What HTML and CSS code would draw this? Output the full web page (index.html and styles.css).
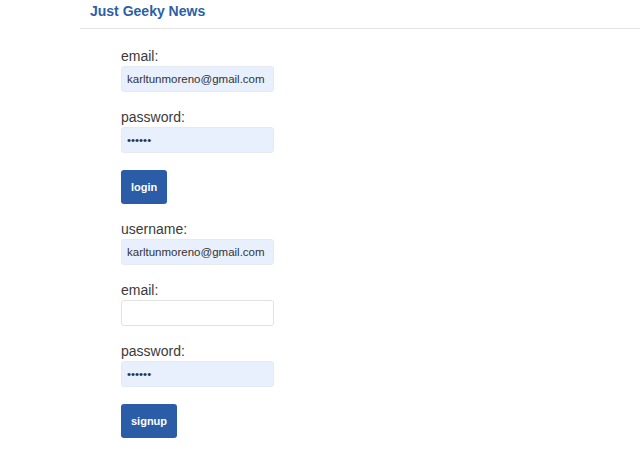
FILE: index.html
```html
<!DOCTYPE html>
<html>
<head>
<meta charset="utf-8">
<link rel="stylesheet" href="styles.css">
</head>
<body>
<header class="topbar">
  <div class="title">Just Geeky News</div>
</header>
<main class="forms">
  <form class="form">
    <label class="field">
      <span class="label">email:</span>
      <input class="input filled" type="text" value="karltunmoreno@gmail.com">
    </label>
    <label class="field">
      <span class="label">password:</span>
      <input class="input filled" type="password" value="abcdef">
    </label>
    <button class="btn" type="button">login</button>
  </form>
  <form class="form">
    <label class="field">
      <span class="label">username:</span>
      <input class="input filled" type="text" value="karltunmoreno@gmail.com">
    </label>
    <label class="field">
      <span class="label">email:</span>
      <input class="input" type="text" value="">
    </label>
    <label class="field">
      <span class="label">password:</span>
      <input class="input filled" type="password" value="abcdef">
    </label>
    <button class="btn" type="button">signup</button>
  </form>
</main>
</body>
</html>
```
FILE: styles.css
```css
html, body {
  margin: 0;
  padding: 0;
  background: #fff;
  font-family: "Liberation Sans", Arial, sans-serif;
}
.topbar {
  margin-left: 80px;
  height: 29px;
  border-bottom: 1px solid #e4e4e4;
  padding-left: 10px;
  box-sizing: border-box;
}
.title {
  font-size: 14px;
  font-weight: bold;
  color: #2c5fa6;
  line-height: 22px;
}
.forms {
  padding: 19px 0 0 121px;
}
.form {
  display: flex;
  flex-direction: column;
  align-items: flex-start;
}
.field {
  display: flex;
  flex-direction: column;
  margin-bottom: 17px;
}
.label {
  font-size: 14px;
  line-height: 16px;
  color: #3a3a3a;
}
.input {
  margin-top: 2px;
  width: 153px;
  height: 26px;
  box-sizing: border-box;
  border: 1px solid #e2e2e2;
  border-radius: 3px;
  background: #fff;
  padding: 0 5px;
  font-family: "Liberation Sans", Arial, sans-serif;
  font-size: 11.5px;
  color: #333;
}
.input.filled {
  background: #e8f0fe;
  border-color: #e4e9f2;
}
.btn {
  height: 34px;
  padding: 0 10px;
  border: none;
  border-radius: 3px;
  background: #2a5ca7;
  color: #fff;
  font-family: "Liberation Sans", Arial, sans-serif;
  font-weight: bold;
  font-size: 11px;
  margin-bottom: 17px;
}
```
